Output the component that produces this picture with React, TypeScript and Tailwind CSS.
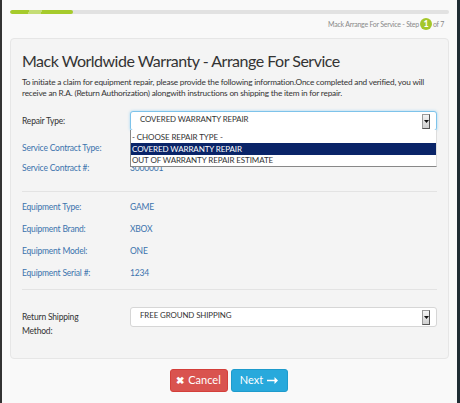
import React from "react";

const F = { fontFamily: "Lato, 'Open Sans', sans-serif" };

function Arrow() {
  return (
    <div className="w-[8px] h-[15px] shrink-0 bg-gradient-to-b from-[#f4f4f4] to-[#cfcfcf] border border-[#9a9a9a] border-r-[#555] border-b-[#555] flex items-center justify-center">
      <svg width="5" height="3" viewBox="0 0 5 3"><path d="M0 0h5L2.5 3z" fill="#111" /></svg>
    </div>
  );
}

function Row({ label, value, h }: { label: string; value: string; h: string }) {
  return (
    <div className={`flex items-center ${h}`}>
      <div className="w-[108px] shrink-0 text-[#3b73ad]">{label}</div>
      <div className="text-[#3b73ad]">{value}</div>
    </div>
  );
}

function Select({ text, focus }: { text: string; focus?: boolean }) {
  return (
    <div
      className={
        focus
          ? "flex-1 h-[20px] bg-white border border-[#7ec3ea] rounded-[3px] shadow-[0_0_3px_#9fd4f2] flex items-center pl-[9px] pr-[6px] text-[7.9px] tracking-[-0.1px]"
          : "flex-1 h-[20px] bg-white border border-[#d6d6d6] rounded-[3px] flex items-center pl-[9px] pr-[6px] text-[7.9px] tracking-[-0.1px]"
      }
    >
      <span className="flex-1 -mt-[2px] whitespace-nowrap">{text}</span>
      <Arrow />
    </div>
  );
}

export default function App() {
  return (
    <div className="w-[460px] h-[403px] bg-[#f9f9f9] flex text-[8.5px] tracking-[-0.2px] overflow-hidden" style={F}>
      <div className="w-[2px] bg-[#333]" />
      <div className="flex-1 flex flex-col px-[8px] pt-[10px]">
        <div className="h-[4px] rounded-full bg-[#e2e2e2] overflow-hidden">
          <div className="h-full w-[63px] bg-[#a6cb2c] rounded-full" style={{ backgroundImage: "linear-gradient(120deg, rgba(255,255,255,0) 30%, rgba(255,255,255,.35) 30%, rgba(255,255,255,.35) 50%, rgba(255,255,255,0) 50%)" }} />
        </div>
        <div className="flex justify-end items-center mt-[3px] pr-[5px] text-[7px] tracking-[-0.25px] text-[#8a8a8a] h-[14px]">
          <span>Mack Arrange For Service - Step</span>
          <span className="w-[12px] h-[12px] rounded-full bg-[#a4c72a] text-white text-[9px] font-bold flex items-center justify-center mx-[1px]">1</span>
          <span>of 7</span>
        </div>
        <div className="mt-[7px] h-[321px] bg-[#f4f4f4] border border-[#e6e6e6] rounded-[4px] px-[11px] pt-[10px] text-[#333]">
          <div className="text-[16px] tracking-[-0.5px] leading-[24px] text-[#333]">Mack Worldwide Warranty - Arrange For Service</div>
          <div className="mt-[4px] text-[8.25px] tracking-[-0.2px] leading-[11px] text-[#333]">
            To initiate a claim for equipment repair, please provide the following information.Once completed and verified, you will receive an R.A. (Return Authorization) alongwith instructions on shipping the item in for repair.
          </div>
          <div className="relative mt-[12px]">
            <div className="flex">
              <div className="w-[108px] shrink-0 leading-[20px]">Repair Type:</div>
              <Select text="COVERED WARRANTY REPAIR" focus />
            </div>
            <div className="absolute left-[108px] right-[0px] top-[19px] pt-[1px] bg-white border border-[#888] border-t-0 border-r-[#ddd] text-[8px] tracking-[-0.1px] leading-[12px] text-[#333] z-10">
              <div className="px-[1px]">- CHOOSE REPAIR TYPE -</div>
              <div className="px-[1px] bg-[#0a2468] text-white">COVERED WARRANTY REPAIR</div>
              <div className="px-[1px] h-[11px] leading-[10px]">OUT OF WARRANTY REPAIR ESTIMATE</div>
            </div>
            <div className="mt-[7px]">
              <Row label="Service Contract Type:" value="" h="h-[20px]" />
              <Row label="Service Contract #:" value="3000001" h="h-[20px]" />
            </div>
          </div>
          <div className="h-px bg-[#e3e3e3] mt-[13px] mb-[4px]" />
          <Row label="Equipment Type:" value="GAME" h="h-[22px]" />
          <Row label="Equipment Brand:" value="XBOX" h="h-[22px]" />
          <Row label="Equipment Model:" value="ONE" h="h-[22px]" />
          <Row label="Equipment Serial #:" value="1234" h="h-[22px]" />
          <div className="h-px bg-[#e3e3e3] mt-[5px]" />
          <div className="flex mt-[17px]">
            <div className="w-[108px] shrink-0 leading-[14px] pt-[3px]">Return Shipping<br />Method:</div>
            <Select text="FREE GROUND SHIPPING" />
          </div>
        </div>
        <div className="flex justify-center gap-[3px] mt-[10px] ml-[-2px]">
          <button className="w-[58px] h-[23px] bg-[#d9534f] border border-[#d43f3a] rounded-[3px] text-white text-[11px] tracking-normal flex items-center justify-center gap-[4px]">
            <span className="text-[10px] font-bold">✖</span>Cancel
          </button>
          <button className="w-[57px] h-[23px] bg-[#28a9dc] border border-[#1e9bcc] rounded-[3px] text-white text-[11px] tracking-normal flex items-center justify-center gap-[4px]">
            Next
            <svg width="11" height="7" viewBox="0 0 11 7"><path d="M0 2.7h7.5V0L11 3.5 7.5 7V4.3H0z" fill="#fff" /></svg>
          </button>
        </div>
      </div>
      <div className="w-[3px] bg-[#1f2d33]" />
    </div>
  );
}
